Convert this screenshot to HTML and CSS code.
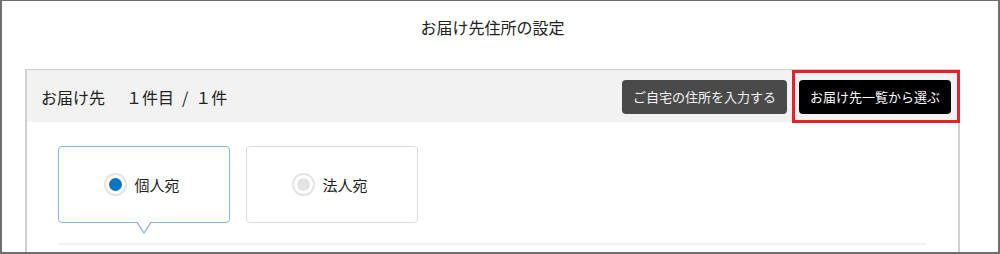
FILE: index.html
```html
<!DOCTYPE html>
<html lang="ja">
<head>
<meta charset="utf-8">
<title>お届け先住所の設定</title>
<link rel="stylesheet" href="styles.css">
</head>
<body>
<div class="frame">
  <h1 class="title">お届け先住所の設定</h1>
  <section class="panel">
    <div class="panel-head">
      <div class="head-label"><span>お届け先</span><span class="count">１件目</span><span class="sep">/</span><span>１件</span></div>
      <div class="head-actions">
        <button class="btn btn-gray" type="button">ご自宅の住所を入力する</button>
        <span class="highlight">
          <button class="btn btn-black" type="button">お届け先一覧から選ぶ</button>
        </span>
      </div>
    </div>
    <div class="panel-body">
      <div class="choices">
        <label class="choice is-selected">
          <span class="radio"><span class="dot"></span></span>
          <span class="choice-text">個人宛</span>
        </label>
        <label class="choice">
          <span class="radio"><span class="dot"></span></span>
          <span class="choice-text">法人宛</span>
        </label>
      </div>
      <div class="divider"></div>
    </div>
  </section>
</div>
</body>
</html>
```
FILE: styles.css
```css
* { box-sizing: border-box; }
html, body { margin: 0; padding: 0; background: #fff; }
body {
  font-family: "Noto Sans CJK JP", "Noto Sans", sans-serif;
  color: #333;
}
.frame {
  width: 1000px;
  height: 254px;
  overflow: hidden;
  border: 2px solid #6e6e6e;
  border-top-width: 1px;
  padding: 0 38px 0 23px;
}
.title {
  margin: 0;
  height: 68px;
  display: flex;
  align-items: center;
  justify-content: center;
  padding-bottom: 16px;
  font-size: 16px;
  font-weight: normal;
  color: #222;
}
.panel {
  border: 2px solid #d0d0d0;
  border-top-width: 1px;
  border-bottom: none;
  height: 200px;
}
.panel-head {
  height: 52px;
  background: #f2f2f2;
  display: flex;
  align-items: center;
  justify-content: space-between;
  padding: 0 7px 0 14px;
}
.head-label {
  display: flex;
  align-items: baseline;
  font-size: 16px;
  color: #222;
  padding-top: 1px;
}
.head-label .count { margin-left: 21px; }
.head-label .sep { margin: 0 7px 0 8px; }
.head-actions {
  display: flex;
  align-items: center;
  gap: 12px;
  padding-top: 1px;
}
.btn {
  height: 34px;
  padding: 0 11px;
  border: none;
  border-radius: 4px;
  font-family: "Noto Sans CJK JP", "Noto Sans", sans-serif;
  font-size: 13px;
  color: #f4f4f4;
  cursor: pointer;
}
.btn-gray { background: #4a4a4a; }
.btn-black { background: #000; color: #fff; }
.highlight {
  position: relative;
  display: inline-flex;
}
.highlight::after {
  content: "";
  position: absolute;
  top: -10px;
  bottom: -9px;
  left: -7px;
  right: -9px;
  border: 3px solid #e52228;
  pointer-events: none;
}
.panel-body {
  padding: 24px 31px 0;
}
.choices {
  display: flex;
  gap: 16px;
}
.choice {
  position: relative;
  width: 172px;
  height: 77px;
  border: 1px solid #dcdcdc;
  border-radius: 4px;
  display: flex;
  align-items: center;
  justify-content: center;
  gap: 7px;
  padding-right: 4px;
  padding-bottom: 1px;
  font-size: 15px;
  color: #222;
  background: #fff;
}
.choice.is-selected { border-color: #86b8da; }
.choice.is-selected::before,
.choice.is-selected::after {
  content: "";
  position: absolute;
  left: 50%;
  width: 0;
  height: 0;
  border-style: solid;
  border-color: transparent;
}
.choice.is-selected::before {
  top: 100%;
  margin-left: -8px;
  border-width: 12px 8px 0 8px;
  border-top-color: #86b8da;
}
.choice.is-selected::after {
  top: calc(100% - 1px);
  margin-left: -7px;
  border-width: 11px 7px 0 7px;
  border-top-color: #fff;
}
.radio {
  width: 23px;
  height: 23px;
  border-radius: 50%;
  border: 2px solid #e4e4e4;
  background: #fff;
  display: flex;
  align-items: center;
  justify-content: center;
}
.dot {
  width: 13px;
  height: 13px;
  border-radius: 50%;
  background: #e3e3e3;
}
.is-selected .dot { background: #0b74c3; }
.choice-text { line-height: 1; }
.divider {
  margin-top: 20px;
  height: 2px;
  background: #f2f2f2;
}
```
